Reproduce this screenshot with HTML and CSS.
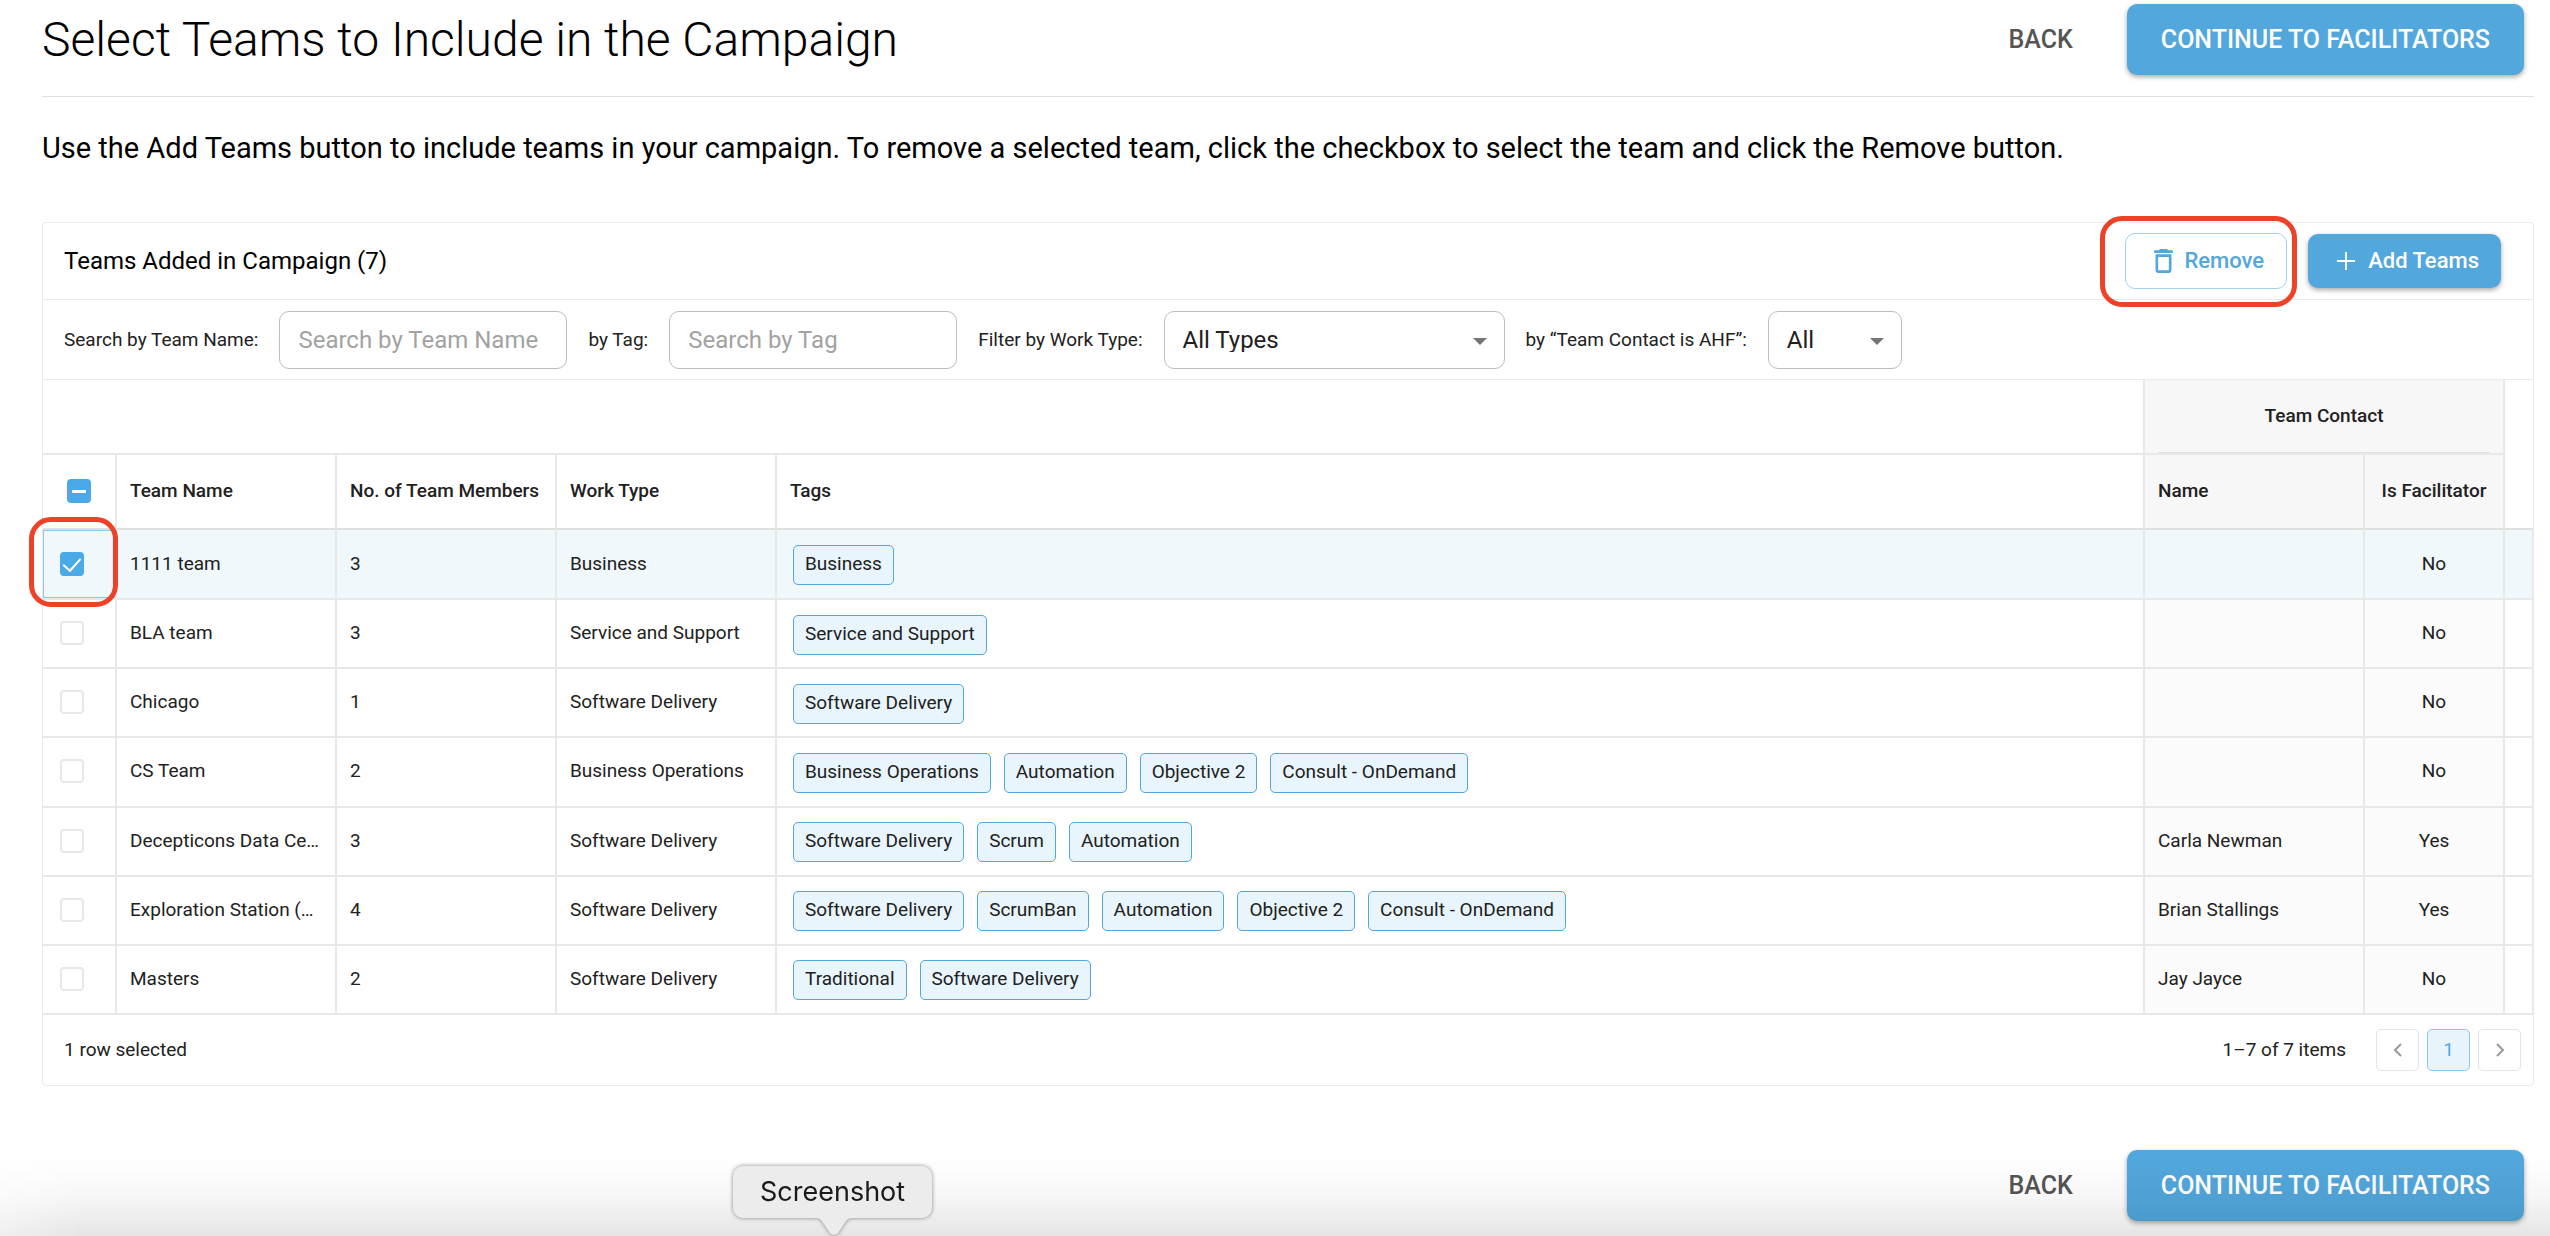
FILE: index.html
```html
<!DOCTYPE html>
<html lang="en">
<head>
<meta charset="utf-8">
<title>Select Teams</title>
<link rel="stylesheet" href="styles.css">
</head>
<body>
<main class="page">
  <header class="page-header">
    <h1 class="title">Select Teams to Include in the Campaign</h1>
    <div class="actions">
      <button type="button" class="btn-text">BACK</button>
      <button type="button" class="btn-main">CONTINUE TO FACILITATORS</button>
    </div>
  </header>
  <p class="intro">Use the Add Teams button to include teams in your campaign. To remove a selected team, click the checkbox to select the team and click the Remove button.</p>

  <section class="panel">
    <div class="panel-header">
      <h2 class="panel-title">Teams Added in Campaign (7)</h2>
      <div class="panel-actions">
        <div class="marked">
          <button type="button" class="btn-small btn-outline">
            <svg class="icon-trash" viewBox="5 3 14 18" aria-hidden="true"><path d="M6 19c0 1.100.9 2 2 2h8c1.100 0 2-.9 2-2V7H6v12zM8 9h8v10H8V9zm7.500-5l-1-1h-5l-1 1H5v2h14V4z" fill="currentColor"/></svg>
            Remove
          </button>
          <span class="mark mark-remove"></span>
        </div>
        <button type="button" class="btn-small btn-solid">
          <svg class="icon-plus" viewBox="0 0 20 20" aria-hidden="true"><path d="M10 1v18M1 10h18" stroke="currentColor" stroke-width="2" fill="none"/></svg>
          Add Teams
        </button>
      </div>
    </div>

    <form class="filters">
      <label for="f-name">Search by Team Name:</label>
      <input id="f-name" class="field field-text" type="text" placeholder="Search by Team Name">
      <label for="f-tag">by Tag:</label>
      <input id="f-tag" class="field field-text" type="text" placeholder="Search by Tag">
      <label for="f-type">Filter by Work Type:</label>
      <span class="select-wrap"><select id="f-type" class="field field-type"><option>All Types</option></select></span>
      <label for="f-ahf">by “Team Contact is AHF”:</label>
      <span class="select-wrap"><select id="f-ahf" class="field field-ahf"><option>All</option></select></span>
    </form>

    <table class="grid">
      <colgroup>
        <col class="c-check"><col class="c-std"><col class="c-std"><col class="c-std"><col><col class="c-std"><col class="c-fac"><col class="c-end">
      </colgroup>
      <thead>
        <tr>
          <td colspan="5" class="blank"></td>
          <th colspan="2" class="contact group"><span>Team Contact</span></th>
          <td class="end"></td>
        </tr>
        <tr>
          <th class="check"><input type="checkbox" class="box box-partial" aria-label="Select all teams"></th>
          <th>Team Name</th>
          <th>No. of Team Members</th>
          <th>Work Type</th>
          <th>Tags</th>
          <th class="contact">Name</th>
          <th class="contact center">Is Facilitator</th>
          <td class="end"></td>
        </tr>
      </thead>
      <tbody>
        <tr class="selected">
          <td class="check"><div class="focus"><input type="checkbox" class="box" checked aria-label="1111 team"></div><span class="mark mark-check"></span></td>
          <td>1111 team</td><td>3</td><td>Business</td>
          <td><div class="tags"><span class="tag">Business</span></div></td>
          <td class="contact"></td><td class="contact center">No</td><td></td>
        </tr>
        <tr>
          <td class="check"><input type="checkbox" class="box" aria-label="BLA team"></td>
          <td>BLA team</td><td>3</td><td>Service and Support</td>
          <td><div class="tags"><span class="tag">Service and Support</span></div></td>
          <td class="contact"></td><td class="contact center">No</td><td></td>
        </tr>
        <tr>
          <td class="check"><input type="checkbox" class="box" aria-label="Chicago"></td>
          <td>Chicago</td><td>1</td><td>Software Delivery</td>
          <td><div class="tags"><span class="tag">Software Delivery</span></div></td>
          <td class="contact"></td><td class="contact center">No</td><td></td>
        </tr>
        <tr>
          <td class="check"><input type="checkbox" class="box" aria-label="CS Team"></td>
          <td>CS Team</td><td>2</td><td>Business Operations</td>
          <td><div class="tags"><span class="tag">Business Operations</span><span class="tag">Automation</span><span class="tag">Objective 2</span><span class="tag">Consult - OnDemand</span></div></td>
          <td class="contact"></td><td class="contact center">No</td><td></td>
        </tr>
        <tr>
          <td class="check"><input type="checkbox" class="box" aria-label="Decepticons"></td>
          <td>Decepticons Data Ce…</td><td>3</td><td>Software Delivery</td>
          <td><div class="tags"><span class="tag">Software Delivery</span><span class="tag">Scrum</span><span class="tag">Automation</span></div></td>
          <td class="contact">Carla Newman</td><td class="contact center">Yes</td><td></td>
        </tr>
        <tr>
          <td class="check"><input type="checkbox" class="box" aria-label="Exploration Station"></td>
          <td>Exploration Station (…</td><td>4</td><td>Software Delivery</td>
          <td><div class="tags"><span class="tag">Software Delivery</span><span class="tag">ScrumBan</span><span class="tag">Automation</span><span class="tag">Objective 2</span><span class="tag">Consult - OnDemand</span></div></td>
          <td class="contact">Brian Stallings</td><td class="contact center">Yes</td><td></td>
        </tr>
        <tr>
          <td class="check"><input type="checkbox" class="box" aria-label="Masters"></td>
          <td>Masters</td><td>2</td><td>Software Delivery</td>
          <td><div class="tags"><span class="tag">Traditional</span><span class="tag">Software Delivery</span></div></td>
          <td class="contact">Jay Jayce</td><td class="contact center">No</td><td></td>
        </tr>
      </tbody>
    </table>

    <div class="panel-footer">
      <span>1 row selected</span>
      <nav class="pager" aria-label="Pages">
        <span class="count">1–7 of 7 items</span>
        <button type="button" class="page-btn" aria-label="Previous page"><svg class="chevron" viewBox="0 0 10 16" aria-hidden="true"><path d="M8 2L2 8l6 6" stroke="currentColor" stroke-width="2" fill="none"/></svg></button>
        <button type="button" class="page-btn current">1</button>
        <button type="button" class="page-btn" aria-label="Next page"><svg class="chevron" viewBox="0 0 10 16" aria-hidden="true"><path d="M2 2l6 6-6 6" stroke="currentColor" stroke-width="2" fill="none"/></svg></button>
      </nav>
    </div>
  </section>

  <footer class="page-footer">
    <div class="actions">
      <button type="button" class="btn-text">BACK</button>
      <button type="button" class="btn-main">CONTINUE TO FACILITATORS</button>
    </div>
  </footer>
</main>
<div class="dock-shade"></div>
<div class="dock-tip">Screenshot
  <svg class="dock-arrow" viewBox="0 0 36 18" aria-hidden="true"><path d="M0 0h36v1c-4 0-6 3-8 6l-6 9q-4 4-8 0l-6-9C6 4 4 1 0 1z" fill="#ececec"/></svg>
</div>
</body>
</html>
```
FILE: styles.css
```css
* { box-sizing: border-box; }
body {
  margin: 0;
  min-height: 100vh;
  overflow: hidden;
  background: #fff;
  color: #212121;
  font: 400 19px/24px Roboto, "Liberation Sans", sans-serif;
}
button, input, select { font: inherit; margin: 0; }
.page { padding: 0 16px 0 42px; }

.page-header {
  display: flex;
  align-items: flex-start;
  justify-content: space-between;
  height: 97px;
  padding: 4px 10px 0 0;
  border-bottom: 1px solid #e0e0e0;
}
.title { margin: 0; font-size: 48px; line-height: 72px; font-weight: 300; color: #000; }
.actions { display: flex; align-items: center; justify-content: flex-end; gap: 24px; }
.btn-text, .btn-main { height: 71px; border: 0; font-size: 25px; font-weight: 500; }
.btn-text { padding: 0 30px; background: none; color: #555; }
.btn-main {
  padding: 0 34px;
  border-radius: 10px;
  background: #52a7dc;
  color: #fff;
  box-shadow: 0 2px 5px rgba(0, 0, 0, .35);
}

.intro { margin: 30px 0 0; font-size: 29px; line-height: 42px; color: #000; }

.panel { margin-top: 53px; border: 1px solid #ebebeb; border-radius: 4px; }
.panel-header {
  display: flex;
  align-items: center;
  justify-content: space-between;
  height: 77px;
  padding: 0 32px 0 21px;
  border-bottom: 1px solid #ebebeb;
}
.panel-title { margin: 0; font-size: 24px; line-height: 32px; font-weight: 400; color: #000; }
.panel-actions { display: flex; align-items: center; gap: 21px; }
.marked { position: relative; }
.mark { position: absolute; border: 5px solid #ee4127; border-radius: 22px; pointer-events: none; }
.mark-remove { inset: -17px -10px -18px -25px; }
.mark-check { inset: -13px -3px -9px -14px; }
.btn-small { display: flex; align-items: center; border-radius: 10px; font-size: 22px; font-weight: 500; }
.btn-outline { height: 56px; padding: 0 22px 0 28px; gap: 11px; border: 1px solid #a0d3f1; background: #fff; color: #52a7dc; }
.btn-solid { height: 54px; padding: 0 22px 0 28px; gap: 12px; border: 0; background: #52a7dc; color: #fff; box-shadow: 0 2px 5px rgba(0, 0, 0, .35); }
.icon-trash { width: 19px; height: 24px; }
.icon-plus { width: 20px; height: 20px; }

.filters { display: flex; align-items: center; gap: 21px; height: 80px; padding: 0 21px; border-bottom: 1px solid #ebebeb; }
.field { height: 58px; padding: 0 18px; border: 1px solid #bdbdbd; border-radius: 10px; background: #fff; color: #212121; font-size: 24px; }
.field::placeholder { color: #a2a2a2; opacity: 1; }
.field-text { width: 288px; }
.select-wrap { position: relative; display: flex; }
.select-wrap::after {
  content: "";
  position: absolute;
  right: 18px;
  top: 27px;
  border: 7px solid transparent;
  border-top-color: #757575;
  border-bottom: 0;
}
select.field { appearance: none; }
.field-type { width: 341px; }
.field-ahf { width: 134px; }

.grid { width: 100%; height: 635px; border-collapse: separate; border-spacing: 0; table-layout: fixed; }
.c-check { width: 74px; }
.c-std { width: 220px; }
.c-fac { width: 140px; }
.c-end { width: 28px; }
.grid th, .grid td {
  height: 69px;
  padding: 0 0 1px 13px;
  border-right: 2px solid #e8e8e8;
  border-bottom: 2px solid #e8e8e8;
  text-align: left;
  font-weight: 400;
  white-space: nowrap;
}
.grid thead th, .grid thead td { height: 75px; }
.grid thead th { font-weight: 500; }
.grid thead .contact { background: #f7f7f7; }
.grid thead tr:last-child > * { border-bottom-color: #e0e0e0; }
.grid thead .end { border-right: 0; }
.grid thead tr:first-child .end { border-bottom: 0; }
.grid .contact { background: #fbfbfb; }
.grid .center { text-align: center; padding-left: 0; }
.grid .group { padding: 0 13px; text-align: center; }
.group span { display: block; line-height: 72px; border-bottom: 1px solid #e0e0e0; }
.grid tbody td:last-child { border-right-width: 1px; }
.grid .check { position: relative; padding: 0 0 1px 17px; }
.grid thead .check { padding-left: 24px; }
.grid .selected td { background: #f0f8fc; }
.grid .selected td.check { padding: 0; }
.focus { display: flex; align-items: center; height: 68px; padding-left: 16px; border: 1px solid #8cc8ec; }
.box {
  appearance: none;
  display: grid;
  place-items: center;
  width: 24px;
  height: 24px;
  border: 2px solid #e8e8e8;
  border-radius: 4px;
  background: #fff;
}
.box:checked, .box-partial { border-color: #4aaae8; background: #4aaae8; }
.box:checked::after { content: ""; width: 8px; height: 15px; margin-bottom: 4px; border: solid #fff; border-width: 0 2px 2px 0; transform: rotate(42deg); }
.box-partial::after { content: ""; width: 14px; height: 3px; background: #fff; }

.tags { display: flex; gap: 13px; padding: 3px 0 0 3px; }
.tag { height: 40px; padding: 0 11px; border: 1px solid #52a7dc; border-radius: 5px; background: #e8f5fc; line-height: 36px; }

.panel-footer { display: flex; align-items: center; justify-content: space-between; height: 70px; padding: 0 12px 0 21px; }
.pager { display: flex; align-items: center; gap: 8px; }
.count { margin-right: 22px; }
.page-btn { display: grid; place-items: center; width: 43px; height: 42px; padding: 0; border: 1px solid #e4e4e4; border-radius: 5px; background: #fff; color: #999; }
.page-btn.current { border-color: #8cc8ec; background: #e8f4fc; color: #4aaae8; }
.chevron { width: 10px; height: 16px; }

.page-footer { padding: 64px 10px 0 0; }

.dock-shade {
  position: fixed;
  inset: auto 0 0 0;
  height: 80px;
  background: linear-gradient(rgba(0, 0, 0, 0), rgba(0, 0, 0, .03) 50%, rgba(0, 0, 0, .1));
  mask-image: linear-gradient(to right, rgba(0, 0, 0, .6), #000 80px);
  pointer-events: none;
}
.dock-tip {
  position: fixed;
  left: 733px;
  bottom: 18px;
  padding: 0 27px;
  border-radius: 10px;
  background: #ececec;
  color: #1a1a1a;
  font: 400 27px/52px Inter, "Liberation Sans", sans-serif;
  filter: drop-shadow(0 0 2px rgba(0, 0, 0, .45));
}
.dock-arrow { position: absolute; left: 83px; top: 51px; width: 36px; height: 18px; }
```
